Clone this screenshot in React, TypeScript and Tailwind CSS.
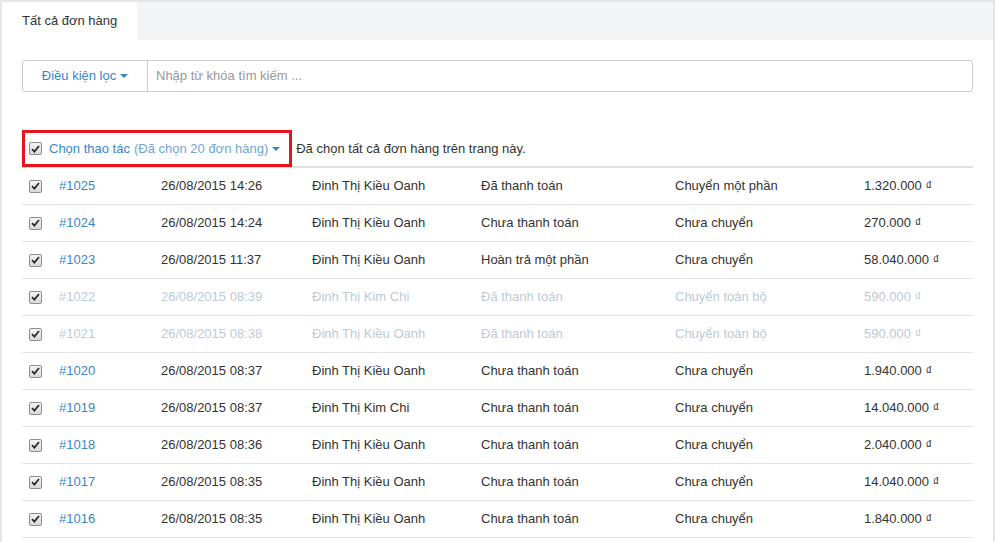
import React from "react";

type Order = {
  id: string;
  date: string;
  name: string;
  pay: string;
  ship: string;
  total: string;
  faded?: boolean;
};

const orders: Order[] = [
  { id: "#1025", date: "26/08/2015 14:26", name: "Đinh Thị Kiều Oanh", pay: "Đã thanh toán", ship: "Chuyển một phần", total: "1.320.000" },
  { id: "#1024", date: "26/08/2015 14:24", name: "Đinh Thị Kiều Oanh", pay: "Chưa thanh toán", ship: "Chưa chuyển", total: "270.000" },
  { id: "#1023", date: "26/08/2015 11:37", name: "Đinh Thị Kiều Oanh", pay: "Hoàn trả một phần", ship: "Chưa chuyển", total: "58.040.000" },
  { id: "#1022", date: "26/08/2015 08:39", name: "Đinh Thị Kim Chi", pay: "Đã thanh toán", ship: "Chuyển toàn bộ", total: "590.000", faded: true },
  { id: "#1021", date: "26/08/2015 08:38", name: "Đinh Thị Kiều Oanh", pay: "Đã thanh toán", ship: "Chuyển toàn bộ", total: "590.000", faded: true },
  { id: "#1020", date: "26/08/2015 08:37", name: "Đinh Thị Kiều Oanh", pay: "Chưa thanh toán", ship: "Chưa chuyển", total: "1.940.000" },
  { id: "#1019", date: "26/08/2015 08:37", name: "Đinh Thị Kim Chi", pay: "Chưa thanh toán", ship: "Chưa chuyển", total: "14.040.000" },
  { id: "#1018", date: "26/08/2015 08:36", name: "Đinh Thị Kiều Oanh", pay: "Chưa thanh toán", ship: "Chưa chuyển", total: "2.040.000" },
  { id: "#1017", date: "26/08/2015 08:35", name: "Đinh Thị Kiều Oanh", pay: "Chưa thanh toán", ship: "Chưa chuyển", total: "14.040.000" },
  { id: "#1016", date: "26/08/2015 08:35", name: "Đinh Thị Kiều Oanh", pay: "Chưa thanh toán", ship: "Chưa chuyển", total: "1.840.000" },
];

function Check() {
  return (
    <span className="flex h-[13px] w-[13px] items-center justify-center rounded-[2px] border border-[#8e8f8f] bg-gradient-to-b from-[#f4f4f4] to-[#d9d9d9]">
      <svg width="9" height="8" viewBox="0 0 9 8">
        <path d="M1 4.2 L3.4 6.6 L8 1" fill="none" stroke="#2b2b2b" strokeWidth="1.8" />
      </svg>
    </span>
  );
}

function Caret() {
  return <span className="ml-[4px] inline-block h-0 w-0 border-x-[4px] border-t-[4px] border-x-transparent border-t-[#3a86c8] align-middle" />;
}

export default function App() {
  return (
    <div className="h-[542px] overflow-hidden bg-[#e6e6e6] px-[2px] pt-[2px] font-['Liberation_Sans',Arial,sans-serif] text-[13px] text-[#333]">
      <div className="h-full rounded-t-[3px] bg-white">
        <div className="flex h-[38px] rounded-t-[3px] bg-[#f3f4f6]">
          <div className="flex w-[135px] items-center rounded-tl-[3px] bg-white pl-5 text-[#333]">
            Tất cả đơn hàng
          </div>
        </div>

        <div className="px-5 pt-5">
          <div className="flex h-[32px] rounded-[3px] border border-[#ccc]">
            <div className="flex w-[125px] items-center justify-center border-r border-[#ccc] text-[#3a86c8]">
              Điều kiện lọc
              <Caret />
            </div>
            <div className="flex items-center pl-[8px] text-[#999]">Nhập từ khóa tìm kiếm ...</div>
          </div>

          <div className="mt-[39px] flex h-[37px] items-center border-b-2 border-[#e0e0e0]">
            <div className="flex h-[37px] items-center border-[3px] border-[#e8131c] pl-[4px] pr-[9px]">
              <Check />
              <span className="ml-[7px] text-[#3a86c8]">Chọn thao tác</span>
              <span className="ml-[4px] text-[#6fa5d6]">(Đã chọn 20 đơn hàng)</span>
              <Caret />
            </div>
            <span className="ml-[4px]">Đã chọn tất cả đơn hàng trên trang này.</span>
          </div>

          {orders.map((o) => (
            <div
              key={o.id}
              className={`grid h-[37px] grid-cols-[37px_102px_151px_169px_194px_189px_1fr] items-center border-b border-[#e3e3e3] ${
                o.faded ? "text-[#bccad6]" : "text-[#333]"
              }`}
            >
              <div className="pl-[7px]">
                <Check />
              </div>
              <div className={o.faded ? "" : "text-[#3a86c8]"}>{o.id}</div>
              <div>{o.date}</div>
              <div>{o.name}</div>
              <div>{o.pay}</div>
              <div>{o.ship}</div>
              <div>
                {o.total} <span className="text-[13px]">₫</span>
              </div>
            </div>
          ))}
        </div>
      </div>
    </div>
  );
}
